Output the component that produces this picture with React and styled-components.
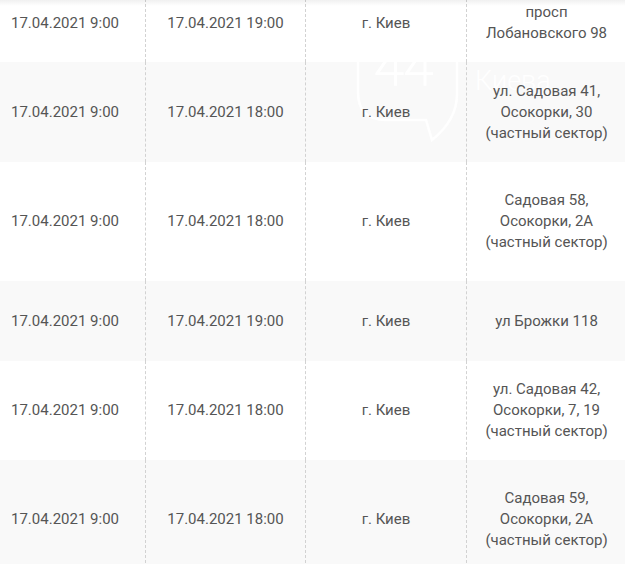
import React from 'react';
import styled, { createGlobalStyle } from 'styled-components';

const GlobalStyle = createGlobalStyle`
  html, body {
    margin: 0;
    padding: 0;
    background: #fff;
    overflow: hidden;
  }
  body {
    font-family: Roboto, "Noto Sans", "Liberation Sans", sans-serif;
  }
`;

const Page = styled.div`
  position: relative;
  width: 625px;
  height: 564px;
  overflow: hidden;
`;

const Table = styled.div`
  width: 641px;
  margin-left: -15px;
  margin-top: -16px;
  display: flex;
  flex-direction: column;
`;

const Row = styled.div`
  display: grid;
  grid-template-columns: 160px 160px 161px 160px;
  height: ${({ $h }) => $h}px;
  background: ${({ $odd }) => ($odd ? '#f9f9f9' : '#ffffff')};
`;

const Cell = styled.div`
  position: relative;
  z-index: 2;
  display: flex;
  align-items: center;
  justify-content: center;
  text-align: center;
  font-size: 15px;
  line-height: 21px;
  color: #555555;
  border-left: ${({ $first }) => ($first ? 'none' : '1px dashed #d2d2d2')};
  white-space: pre-line;
`;

const TopShade = styled.div`
  position: absolute;
  z-index: 3;
  left: 0;
  top: 0;
  width: 100%;
  height: 6px;
  background: linear-gradient(to bottom, rgba(0, 0, 0, 0.06), rgba(0, 0, 0, 0));
  pointer-events: none;
`;

const Watermark = styled.svg`
  position: absolute;
  z-index: 1;
  left: 350px;
  top: 20px;
  pointer-events: none;
`;

const rows = [
  { h: 78, start: '17.04.2021 9:00', end: '17.04.2021 19:00', addr: 'просп\nЛобановского 98' },
  { h: 100, start: '17.04.2021 9:00', end: '17.04.2021 18:00', addr: 'ул. Садовая 41,\nОсокорки, 30\n(частный сектор)' },
  { h: 119, start: '17.04.2021 9:00', end: '17.04.2021 18:00', addr: 'Садовая 58,\nОсокорки, 2А\n(частный сектор)' },
  { h: 80, start: '17.04.2021 9:00', end: '17.04.2021 19:00', addr: 'ул Брожки 118' },
  { h: 99, start: '17.04.2021 9:00', end: '17.04.2021 18:00', addr: 'ул. Садовая 42,\nОсокорки, 7, 19\n(частный сектор)' },
  { h: 118, start: '17.04.2021 9:00', end: '17.04.2021 18:00', addr: 'Садовая 59,\nОсокорки, 2А\n(частный сектор)' },
];

const App = () => {
  return (
    <>
      <GlobalStyle />
      <Page>
        <Table>
          {rows.map((r, i) => (
            <Row key={i} $h={r.h} $odd={i % 2 === 1}>
              <Cell $first>{r.start}</Cell>
              <Cell>{r.end}</Cell>
              <Cell>г. Киев</Cell>
              <Cell>{r.addr}</Cell>
            </Row>
          ))}
        </Table>
        {/* faint site logo, sits between row backgrounds and cell text */}
        <Watermark width="220" height="130" viewBox="0 0 220 130">
          <path
            d="M8 10 L8 72 Q8 100 36 100 L76 100 L82 120 Q107 100 107 74 L107 10"
            fill="none"
            stroke="#ffffff"
            strokeWidth="2.5"
          />
          <text x="24" y="65" fontFamily="Roboto, sans-serif" fontWeight="100" fontSize="54" fill="none" stroke="#ffffff" strokeWidth="1.5">44</text>
          <text x="125" y="70" fontFamily="Roboto, sans-serif" fontWeight="300" fontSize="27" fill="#ffffff">Киева</text>
        </Watermark>
        <TopShade />
      </Page>
    </>
  );
};

export default App;
